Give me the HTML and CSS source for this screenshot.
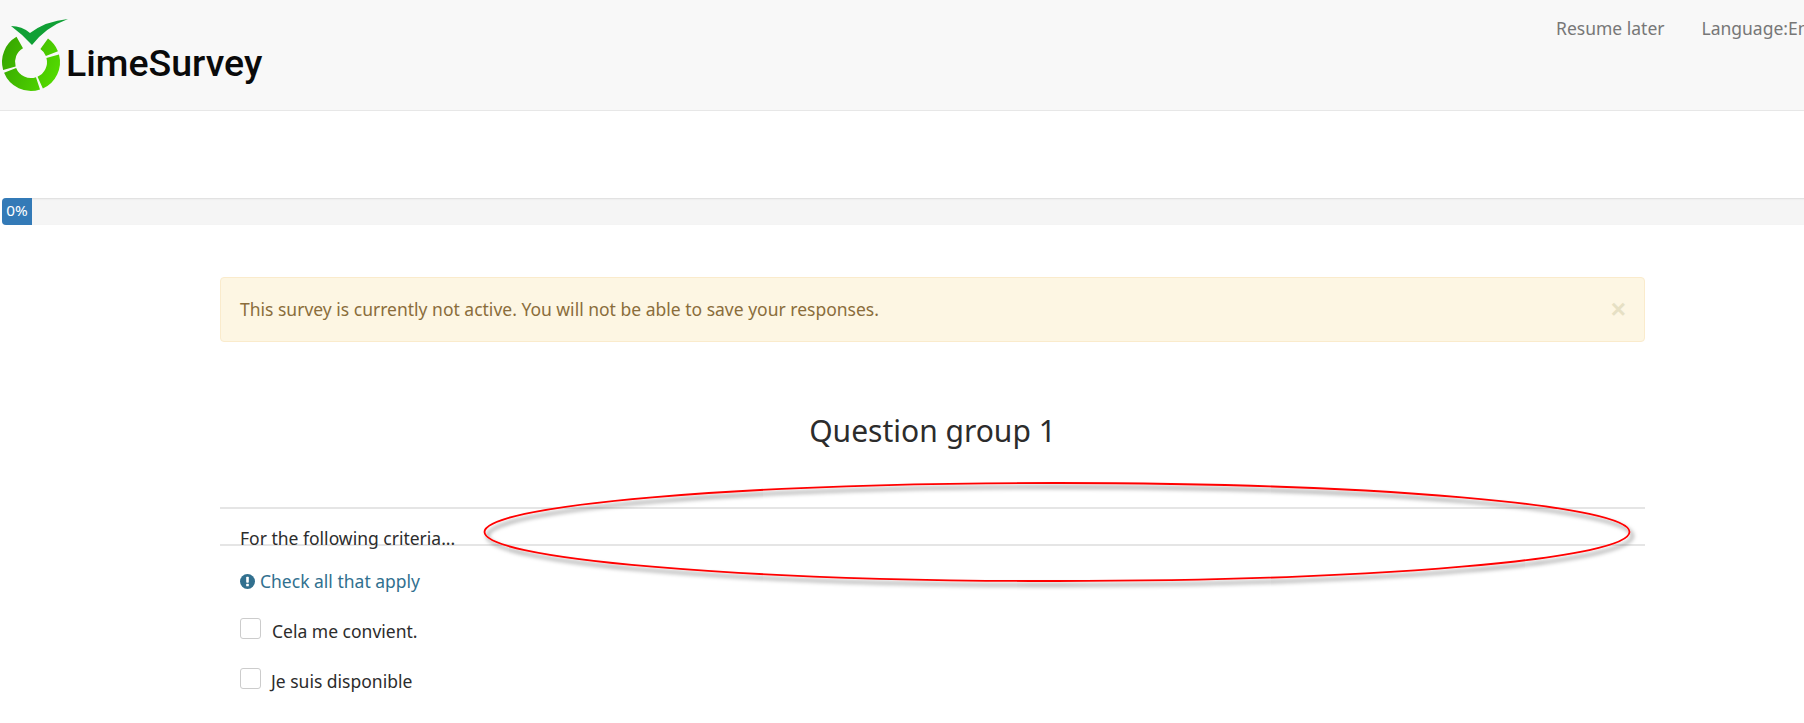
FILE: index.html
```html
<!DOCTYPE html>
<html lang="en">
<head>
<meta charset="utf-8">
<title>LimeSurvey</title>
<link rel="stylesheet" href="styles.css">
</head>
<body>
<header class="navbar">
  <div class="brand">
    <svg class="brand-mark" width="70" height="95" viewBox="0 0 70 95" aria-hidden="true">
      <defs>
        <linearGradient id="ring" gradientUnits="userSpaceOnUse" x1="2" y1="50" x2="60" y2="75">
          <stop offset="0" stop-color="#36a600"/>
          <stop offset="1" stop-color="#54dc00"/>
        </linearGradient>
      </defs>
      <g fill="none" stroke="url(#ring)" stroke-width="13">
        <path d="M9.4 68.2A22.5 22.5 0 0 1 19.75 42.5"/>
        <path d="M44.2 43.8A22.5 22.5 0 0 1 51.9 53.6"/>
        <path d="M52.7 56.2A22.5 22.5 0 0 1 40.2 82.6"/>
        <path d="M38 83.4A22.5 22.5 0 0 1 10.1 70.4"/>
      </g>
      <path fill="#10a035" d="M11 26Q22 26 30 33Q46 21 68 19Q46 27 32 45Q22 34 11 26Z"/>
    </svg>
    <span class="brand-name">LimeSurvey</span>
  </div>
  <nav class="nav-links">
    <a class="nav-link">Resume later</a>
    <a class="nav-link">Language:English</a>
  </nav>
</header>

<div class="progress">
  <div class="progress-bar">0%</div>
</div>

<main class="content">
  <div class="alert">
    <span class="alert-text">This survey is currently not active. You will not be able to save your responses.</span>
    <span class="alert-close">×</span>
  </div>

  <h1 class="group-title">Question group 1</h1>

  <div class="question-title">For the following criteria...</div>

  <div class="help">
    <svg class="help-icon" width="15" height="15" viewBox="0 0 16 16" aria-hidden="true">
      <circle cx="8" cy="8" r="8" fill="#31708f"/>
      <rect x="6.6" y="3" width="2.8" height="6.4" rx="0.8" fill="#fff"/>
      <rect x="6.6" y="10.4" width="2.8" height="2.6" rx="0.6" fill="#fff"/>
    </svg>
    <span>Check all that apply</span>
  </div>

  <ul class="answers">
    <li class="answer"><span class="check"></span><span class="answer-label">Cela me convient.</span></li>
    <li class="answer"><span class="check"></span><span class="answer-label answer-label-tight">Je suis disponible</span></li>
  </ul>
</main>

<svg class="annotation" width="1804" height="723" viewBox="0 0 1804 723" aria-hidden="true">
  <defs>
    <filter id="shadow" x="-5%" y="-30%" width="110%" height="170%">
      <feDropShadow dx="3" dy="4" stdDeviation="2.2" flood-color="#000" flood-opacity="0.55"/>
    </filter>
  </defs>
  <ellipse cx="1057" cy="532" rx="572.5" ry="49" fill="none" stroke="#f00" stroke-width="1.8" filter="url(#shadow)"/>
</svg>
</body>
</html>
```
FILE: styles.css
```css
html, body {
  margin: 0;
  padding: 0;
  height: 723px;
  overflow: hidden;
  background: #fff;
}

body {
  position: relative;
  font-family: "Noto Sans", "Open Sans", sans-serif;
  font-size: 17.5px;
  color: #2c2c2c;
}

.navbar {
  display: grid;
  grid-template-columns: 1fr 248px;
  height: 110px;
  background: #f8f8f8;
  border-bottom: 1px solid #e7e7e7;
}

.brand {
  display: flex;
  align-items: flex-start;
}

.brand-mark {
  flex: none;
}

.brand-name {
  margin: 41px 0 0 -4px;
  font-family: Roboto, "Liberation Sans", sans-serif;
  font-weight: 500;
  font-size: 37.5px;
  line-height: 44px;
  color: #0a0a0a;
}

.nav-links {
  display: flex;
  gap: 37px;
  padding-top: 16px;
  overflow: hidden;
  white-space: nowrap;
}

.nav-link {
  line-height: 24px;
  color: #777;
}

.progress {
  height: 27px;
  margin: 87px -8px 0 2px;
  background: #f5f5f5;
  box-shadow: inset 0 1px 2px rgba(0, 0, 0, 0.1);
  border-radius: 4px 0 0 4px;
}

.progress-bar {
  width: 30px;
  height: 27px;
  background: #337ab7;
  color: #fff;
  font-size: 15.3px;
  line-height: 25px;
  text-align: center;
  border-radius: 4px 0 0 4px;
}

.content {
  width: 1425px;
  margin: 52px 0 0 220px;
}

.alert {
  display: flex;
  justify-content: space-between;
  align-items: center;
  box-sizing: border-box;
  height: 65px;
  padding: 0 18px 0 19px;
  background: #fdf6e3;
  border: 1px solid #faebcc;
  border-radius: 4px;
  color: #8a6d3b;
}

.alert-text {
  margin-top: -2px;
}

.alert-close {
  font-family: "Liberation Sans", sans-serif;
  font-size: 26px;
  font-weight: 700;
  line-height: 21px;
  color: #e6e0c4;
}

.group-title {
  margin: 69px 0 0;
  font-size: 30px;
  font-weight: 400;
  line-height: 40px;
  text-align: center;
  color: #2c2c2c;
}

.question-title {
  box-sizing: border-box;
  height: 39px;
  margin-top: 56px;
  padding: 17px 0 0 20px;
  line-height: 24px;
  border-top: 2px solid #e5e5e5;
  border-bottom: 2px solid #e5e5e5;
}

.help {
  display: flex;
  align-items: center;
  gap: 5px;
  margin: 23px 0 0 20px;
  line-height: 24px;
  color: #31708f;
}

.answers {
  margin: 25px 0 0 20px;
  padding: 0;
  list-style: none;
}

.answer {
  display: flex;
  align-items: flex-start;
  height: 50px;
}

.check {
  flex: none;
  box-sizing: border-box;
  width: 21px;
  height: 21px;
  background: #fff;
  border: 1px solid #ccc;
  border-radius: 3px;
}

.answer-label {
  margin: 1px 0 0 11px;
  line-height: 24px;
}

.answer-label-tight {
  margin-left: 10px;
}

.annotation {
  position: absolute;
  left: 0;
  top: 0;
  pointer-events: none;
}
```
